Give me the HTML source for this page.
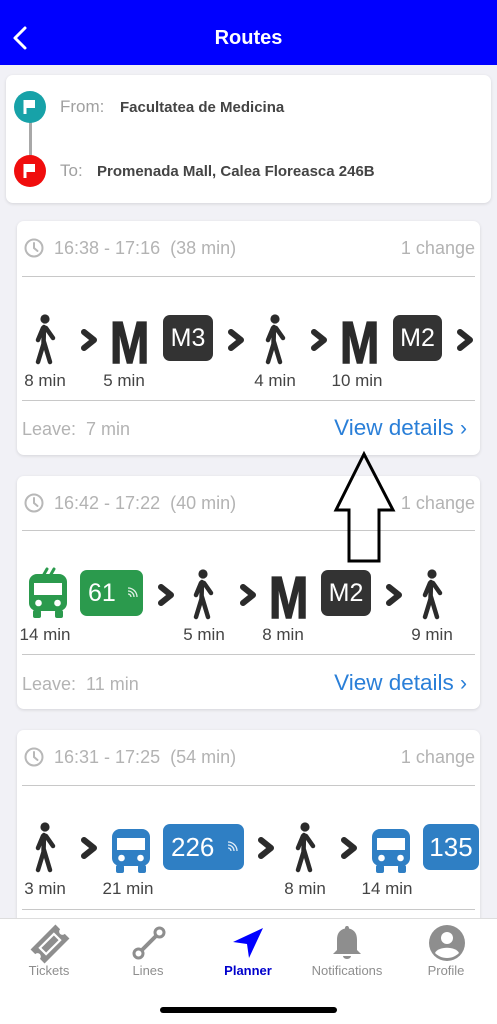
<!DOCTYPE html>
<html><head><meta charset="utf-8">
<style>
*{margin:0;padding:0;box-sizing:border-box}
body{width:497px;height:1024px;background:#f1f1f6;font-family:"Liberation Sans",sans-serif;position:relative;overflow:hidden}
.a{position:absolute}
.card{position:absolute;background:#fff;border-radius:7px;box-shadow:0 1px 3px rgba(0,0,0,0.12)}
.hd{font-size:18px;color:#b3b3b3;white-space:nowrap}
.hr{position:absolute;height:1px;background:#c8c8c8}
.lbl{position:absolute;font-size:17px;color:#444;text-align:center;width:70px;white-space:nowrap}
.badge{position:absolute;border-radius:7px;color:#fff;font-size:25px;display:flex;align-items:center;justify-content:center;height:46px}
.M{position:absolute;font-weight:bold;font-size:59px;color:#2b2b2b;line-height:1;transform:scaleX(0.8);transform-origin:left top;-webkit-text-stroke:1.5px #2b2b2b}
.vd{position:absolute;font-size:22.5px;color:#2a7fd8;white-space:nowrap}
.tab{position:absolute;top:963px;font-size:13px;color:#8e8e8e;width:100px;text-align:center}
</style></head><body>
<svg width="0" height="0" style="position:absolute">
<defs>
<symbol id="walk" viewBox="0 0 24 51"><circle cx="12" cy="5" r="4.6" fill="#2b2b2b"/><g stroke="#2b2b2b" stroke-width="4.5" stroke-linecap="round" fill="none"><path d="M11 13 L10.5 30 L5 48"/><path d="M11 28 L17 48"/><path d="M10 14 L5 26"/><path d="M13 14 L20 24"/></g></symbol>
<symbol id="chev" viewBox="0 0 18 24"><polyline points="4,4 14,12 4,20" fill="none" stroke="#2b2b2b" stroke-width="6" stroke-linecap="round" stroke-linejoin="round"/></symbol>
<symbol id="bus" viewBox="0 0 38 44"><rect x="0" y="0" width="38" height="37" rx="8" fill="#2f7fc4"/><rect x="4" y="36" width="8" height="8" rx="2" fill="#2f7fc4"/><rect x="26" y="36" width="8" height="8" rx="2" fill="#2f7fc4"/><rect x="5" y="9" width="28" height="12" fill="#fff"/><circle cx="9.5" cy="29" r="3.3" fill="#fff"/><circle cx="28.5" cy="29" r="3.3" fill="#fff"/></symbol>
<symbol id="wifi" viewBox="0 0 12 12"><g fill="none" stroke="#fff" stroke-width="1.3" opacity="0.85"><path d="M2 4 A6 6 0 0 1 8 10"/><path d="M2 1 A9 9 0 0 1 11 10"/><path d="M2 7 A3 3 0 0 1 5 10"/></g></symbol>
<symbol id="clock" viewBox="0 0 20 20"><circle cx="10" cy="10" r="8.5" fill="none" stroke="#b8b8b8" stroke-width="2"/><path d="M10 5 V10 L13.5 13" fill="none" stroke="#b8b8b8" stroke-width="2" stroke-linecap="round"/></symbol>
</defs></svg>

<!-- header -->
<div class="a" style="left:0;top:0;width:497px;height:65px;background:#0000ff"></div>
<svg class="a" style="left:10px;top:25px" width="20" height="26"><polyline points="15,3 5,13 15,23" fill="none" stroke="#fff" stroke-width="3" stroke-linecap="round" stroke-linejoin="round"/></svg>
<div class="a" style="left:0;width:497px;top:27px;text-align:center;color:#fff;font-size:20px;font-weight:bold">Routes</div>

<!-- from/to -->
<div class="card" style="left:6px;top:75px;width:485px;height:128px"></div>
<div class="a" style="left:29px;top:120px;width:3px;height:38px;background:#a8a8a8"></div>
<svg class="a" style="left:14px;top:91px" width="32" height="32"><circle cx="16" cy="16" r="16" fill="#17a2a8"/><path d="M11 9 V23" stroke="#fff" stroke-width="3"/><path d="M12 9 H21 V17 H12Z" fill="#fff"/></svg>
<svg class="a" style="left:14px;top:155px" width="32" height="32"><circle cx="16" cy="16" r="16" fill="#f00d0d"/><path d="M11 9 V23" stroke="#fff" stroke-width="3"/><path d="M12 9 H21 V17 H12Z" fill="#fff"/></svg>
<div class="a" style="left:60px;top:97px;font-size:17px;color:#a0a0a0">From:</div>
<div class="a" style="left:120px;top:99px;font-size:15px;font-weight:bold;color:#444">Facultatea de Medicina</div>
<div class="a" style="left:60px;top:161px;font-size:17px;color:#a0a0a0">To:</div>
<div class="a" style="left:97px;top:163px;font-size:15px;font-weight:bold;color:#444">Promenada Mall, Calea Floreasca 246B</div>

<!-- card 1 -->
<div class="card" style="left:17px;top:221px;width:463px;height:234px"></div>
<svg class="a" style="left:24px;top:238px" width="20" height="20"><use href="#clock"/></svg>
<div class="a hd" style="left:54px;top:238px">16:38 - 17:16 &nbsp;(38 min)</div>
<div class="a hd" style="right:22px;top:238px">1 change</div>
<div class="hr" style="left:22px;top:276px;width:453px"></div>
<svg class="a" style="left:33px;top:314px" width="24" height="51"><use href="#walk"/></svg>
<svg class="a" style="left:80px;top:328px" width="18" height="24"><use href="#chev"/></svg>
<div class="M" style="left:110px;top:314px">M</div>
<div class="badge" style="left:163px;top:315px;width:50px;background:#333">M3</div>
<svg class="a" style="left:227px;top:328px" width="18" height="24"><use href="#chev"/></svg>
<svg class="a" style="left:263px;top:314px" width="24" height="51"><use href="#walk"/></svg>
<svg class="a" style="left:310px;top:328px" width="18" height="24"><use href="#chev"/></svg>
<div class="M" style="left:340px;top:314px">M</div>
<div class="badge" style="left:393px;top:315px;width:49px;background:#333">M2</div>
<svg class="a" style="left:456px;top:328px" width="18" height="24"><use href="#chev"/></svg>
<div class="lbl" style="left:10px;top:371px">8 min</div>
<div class="lbl" style="left:89px;top:371px">5 min</div>
<div class="lbl" style="left:240px;top:371px">4 min</div>
<div class="lbl" style="left:322px;top:371px">10 min</div>
<div class="hr" style="left:22px;top:400px;width:453px"></div>
<div class="a hd" style="left:22px;top:419px">Leave: &nbsp;7 min</div>
<div class="vd" style="right:30px;top:415px">View details <span style="font-size:21px">&#x203A;</span></div>

<!-- card 2 -->
<div class="card" style="left:17px;top:476px;width:463px;height:233px"></div>
<svg class="a" style="left:24px;top:493px" width="20" height="20"><use href="#clock"/></svg>
<div class="a hd" style="left:54px;top:493px">16:42 - 17:22 &nbsp;(40 min)</div>
<div class="a hd" style="right:22px;top:493px">1 change</div>
<div class="hr" style="left:22px;top:530px;width:453px"></div>
<svg class="a" style="left:29px;top:567px" width="38" height="51" viewBox="0 0 38 51"><g stroke="#2b9a4d" stroke-width="3" stroke-linecap="round"><path d="M14 9 L18 2"/><path d="M21 9 L25 2"/></g><g transform="translate(0,7)"><rect x="0" y="0" width="38" height="37" rx="8" fill="#2b9a4d"/><rect x="4" y="36" width="8" height="8" rx="2" fill="#2b9a4d"/><rect x="26" y="36" width="8" height="8" rx="2" fill="#2b9a4d"/><rect x="5" y="9" width="28" height="12" fill="#fff"/><circle cx="9.5" cy="29" r="3.3" fill="#fff"/><circle cx="28.5" cy="29" r="3.3" fill="#fff"/></g></svg>
<div class="badge" style="left:80px;top:570px;width:63px;background:#2b9a4d;justify-content:flex-start;padding-left:8px">61<svg style="margin-left:10px" width="12" height="12"><use href="#wifi"/></svg></div>
<svg class="a" style="left:157px;top:583px" width="18" height="24"><use href="#chev"/></svg>
<svg class="a" style="left:191px;top:569px" width="24" height="51"><use href="#walk"/></svg>
<svg class="a" style="left:239px;top:583px" width="18" height="24"><use href="#chev"/></svg>
<div class="M" style="left:269px;top:569px">M</div>
<div class="badge" style="left:321px;top:570px;width:50px;background:#333">M2</div>
<svg class="a" style="left:385px;top:583px" width="18" height="24"><use href="#chev"/></svg>
<svg class="a" style="left:420px;top:569px" width="24" height="51"><use href="#walk"/></svg>
<div class="lbl" style="left:10px;top:625px">14 min</div>
<div class="lbl" style="left:169px;top:625px">5 min</div>
<div class="lbl" style="left:248px;top:625px">8 min</div>
<div class="lbl" style="left:397px;top:625px">9 min</div>
<div class="hr" style="left:22px;top:654px;width:453px"></div>
<div class="a hd" style="left:22px;top:674px">Leave: &nbsp;11 min</div>
<div class="vd" style="right:30px;top:670px">View details <span style="font-size:21px">&#x203A;</span></div>

<!-- arrow annotation -->
<svg class="a" style="left:330px;top:450px" width="70" height="116"><polygon points="34,4 6,60 19,60 19,111 49,111 49,60 63,60" fill="none" stroke="#000" stroke-width="3" stroke-linejoin="miter"/></svg>

<!-- card 3 -->
<div class="card" style="left:17px;top:730px;width:463px;height:200px"></div>
<svg class="a" style="left:24px;top:747px" width="20" height="20"><use href="#clock"/></svg>
<div class="a hd" style="left:54px;top:747px">16:31 - 17:25 &nbsp;(54 min)</div>
<div class="a hd" style="right:22px;top:747px">1 change</div>
<div class="hr" style="left:22px;top:785px;width:453px"></div>
<svg class="a" style="left:33px;top:822px" width="24" height="51"><use href="#walk"/></svg>
<svg class="a" style="left:80px;top:836px" width="18" height="24"><use href="#chev"/></svg>
<svg class="a" style="left:112px;top:829px" width="38" height="44"><use href="#bus"/></svg>
<div class="badge" style="left:163px;top:824px;width:81px;background:#2f7fc4;font-size:26px;justify-content:flex-start;padding-left:8px">226<svg style="margin-left:12px" width="12" height="12"><use href="#wifi"/></svg></div>
<svg class="a" style="left:257px;top:836px" width="18" height="24"><use href="#chev"/></svg>
<svg class="a" style="left:293px;top:822px" width="24" height="51"><use href="#walk"/></svg>
<svg class="a" style="left:340px;top:836px" width="18" height="24"><use href="#chev"/></svg>
<svg class="a" style="left:372px;top:829px" width="38" height="44"><use href="#bus"/></svg>
<div class="badge" style="left:423px;top:824px;width:56px;background:#2f7fc4;font-size:26px">135</div>
<div class="lbl" style="left:10px;top:879px">3 min</div>
<div class="lbl" style="left:93px;top:879px">21 min</div>
<div class="lbl" style="left:270px;top:879px">8 min</div>
<div class="lbl" style="left:352px;top:879px">14 min</div>
<div class="hr" style="left:22px;top:909px;width:453px"></div>

<!-- tab bar -->
<div class="a" style="left:0;top:918px;width:497px;height:106px;background:#fff;border-top:1px solid #ddd"></div>
<svg class="a" style="left:28px;top:922px" width="44" height="44" viewBox="0 0 40 40"><g transform="rotate(-45 20 20)"><path d="M4 11 H36 V17 A3 3 0 0 0 36 23 V29 H4 V23 A3 3 0 0 0 4 17Z" fill="#8e8e8e"/><rect x="10" y="15" width="20" height="10" fill="#fff"/><rect x="12" y="17" width="16" height="6" fill="#8e8e8e"/></g></svg>
<svg class="a" style="left:130px;top:924px" width="38" height="38" viewBox="0 0 38 38"><path d="M10 28 L27 11" stroke="#8e8e8e" stroke-width="4"/><circle cx="29.5" cy="8.5" r="4.5" fill="#fff" stroke="#8e8e8e" stroke-width="3"/><circle cx="8.5" cy="29.5" r="4.5" fill="#fff" stroke="#8e8e8e" stroke-width="3"/></svg>
<svg class="a" style="left:230px;top:925px" width="36" height="36" viewBox="0 0 36 36"><path d="M33 3 L3 17 L17 19 L19 33 Z" fill="#0000ff"/></svg>
<svg class="a" style="left:330px;top:924px" width="34" height="38" viewBox="0 0 34 38"><path d="M17 2 C15.5 2 15 3 15 4.5 C9 6 7 10 7 16 V26 L3 30 H31 L27 26 V16 C27 10 25 6 19 4.5 C19 3 18.5 2 17 2Z" fill="#8e8e8e"/><path d="M13 32 A4 3 0 0 0 21 32Z" fill="#8e8e8e"/></svg>
<svg class="a" style="left:428px;top:924px" width="38" height="38" viewBox="0 0 38 38"><circle cx="19" cy="19" r="18" fill="#8e8e8e"/><circle cx="19" cy="14" r="6" fill="#fff"/><path d="M7 29 C10 22 28 22 31 29 C28 32 24 34 19 34 C14 34 10 32 7 29Z" fill="#fff"/></svg>
<div class="tab" style="left:-1px">Tickets</div>
<div class="tab" style="left:98px">Lines</div>
<div class="tab" style="left:198px;color:#0000cc;font-weight:bold">Planner</div>
<div class="tab" style="left:297px">Notifications</div>
<div class="tab" style="left:396px">Profile</div>
<div class="a" style="left:160px;top:1007px;width:177px;height:6px;border-radius:3px;background:#000"></div>
</body></html>
